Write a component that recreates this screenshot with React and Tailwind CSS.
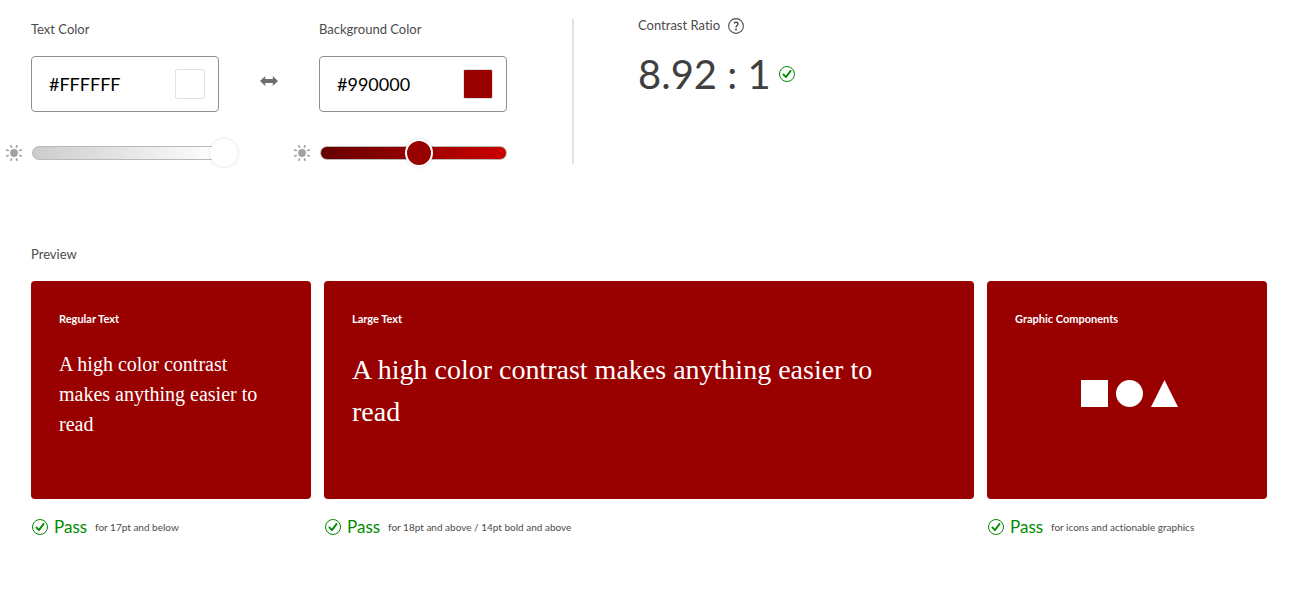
import { useState } from "react";

function CheckIcon() {
  return (
    <svg viewBox="0 0 16 16" className="size-4 shrink-0 text-[#008a00]" fill="none" stroke="currentColor" aria-hidden="true">
      <circle cx="8" cy="8" r="7.5" strokeWidth="1" />
      <path d="M4.4 8.4 L6.9 11.1 L11.6 4.9" strokeWidth="1.8" strokeLinecap="round" strokeLinejoin="round" />
    </svg>
  );
}

function HelpIcon() {
  return (
    <svg viewBox="0 0 16 16" className="size-4" fill="none" stroke="currentColor" aria-hidden="true">
      <circle cx="8" cy="8" r="7.4" strokeWidth="1.1" />
      <path d="M5.9 5.1 C6.6 4.5 7.3 4.3 8.1 4.3 C9.3 4.3 10 5 10 6 C10 7.4 8 7.6 8 9.4" strokeWidth="1.4" />
      <circle cx="8" cy="11.4" r="1" fill="currentColor" stroke="none" />
    </svg>
  );
}

function SunIcon() {
  return (
    <svg viewBox="0 0 18 18" className="size-[18px] shrink-0 text-[#a2a2a2]" fill="currentColor" stroke="currentColor" aria-hidden="true">
      <circle cx="9" cy="9" r="3.9" stroke="none" />
      <path
        d="M11.2 3.8 L12.3 1.1 M14.2 6.8 L16.9 5.7 M14.2 11.2 L16.9 12.3 M11.2 14.2 L12.3 16.9 M6.8 14.2 L5.7 16.9 M3.8 11.2 L1.1 12.3 M3.8 6.8 L1.1 5.7 M6.8 3.8 L5.7 1.1"
        strokeWidth="1.6"
      />
    </svg>
  );
}

function SwapIcon() {
  return (
    <svg viewBox="0 0 18 12" className="h-3 w-[18px]" fill="currentColor" aria-hidden="true">
      <path d="M0 6 L5.2 0.9 V4 H12.8 V0.9 L18 6 L12.8 11.1 V8 H5.2 V11.1 Z" />
    </svg>
  );
}

function ColorField({ id, label, value, onChange, trackClass, level }) {
  return (
    <div className="w-[188px]">
      <label htmlFor={id} className="block text-[13px] leading-5">{label}</label>
      <div className="mt-[17px] flex h-14 items-center justify-between rounded border border-[#909090] pr-[13px] pl-[17px]">
        <input
          id={id}
          value={value}
          onChange={(e) => onChange(e.target.value)}
          className="w-28 text-[18px] leading-6 text-black outline-none"
        />
        <button
          type="button"
          aria-label={label + " picker"}
          className="size-[30px] rounded-xs border border-[#e1e1e1]"
          style={{ backgroundColor: value }}
        />
      </div>
      <div className="mt-[27px] -ml-[26px] flex h-7 items-center gap-[9px]">
        <SunIcon />
        <div className="relative flex-1">
          <div className={"h-[14px] rounded-full border border-[#b9b9b9] bg-linear-to-r " + trackClass} />
          <input
            type="range"
            min="0"
            max="100"
            defaultValue={level}
            aria-label={label + " brightness"}
            className="absolute -top-2 -left-2 h-[30px] w-[214px] appearance-none bg-transparent [&::-webkit-slider-thumb]:size-[28px] [&::-webkit-slider-thumb]:appearance-none [&::-webkit-slider-thumb]:rounded-full [&::-webkit-slider-thumb]:border-2 [&::-webkit-slider-thumb]:border-white [&::-webkit-slider-thumb]:bg-(--thumb) [&::-webkit-slider-thumb]:shadow-[0_0_3px_rgba(0,0,0,0.16)]"
            style={{ "--thumb": value }}
          />
        </div>
      </div>
    </div>
  );
}

function PreviewCard({ title, note, fg, bg, children }) {
  return (
    <div>
      <div className="flex h-[218px] flex-col rounded p-7" style={{ color: fg, backgroundColor: bg }}>
        <h3 className="text-[11px] leading-5 font-bold">{title}</h3>
        {children}
      </div>
      <div className="mt-4 flex items-center px-px leading-6">
        <CheckIcon />
        <span className="ml-[6px] text-[17px] text-[#008a00]">Pass</span>
        <span className="ml-2 text-[10px]">{note}</span>
      </div>
    </div>
  );
}

export default function App() {
  const [fg, setFg] = useState("#FFFFFF");
  const [bg, setBg] = useState("#990000");
  const swap = () => {
    setFg(bg);
    setBg(fg);
  };

  return (
    <main className="bg-white pt-[19px] pr-[38px] pb-12 pl-[31px] font-['Lato',sans-serif] text-[#4b4b4b] [font-variant-ligatures:none]">
      <section className="flex">
        <ColorField id="text-color" label="Text Color" value={fg} onChange={setFg} level={100} trackClass="from-[#cccccc] to-white" />
        <div className="flex w-[100px] justify-center pt-[56px]">
          <button type="button" aria-label="Swap colors" onClick={swap} className="h-3 text-[#6e6e6e]">
            <SwapIcon />
          </button>
        </div>
        <ColorField id="background-color" label="Background Color" value={bg} onChange={setBg} level={50} trackClass="from-[#660000] to-[#cc0000]" />
        <div className="ml-[65px] h-[145px] w-[2px] bg-[#e1e1e1]" />
        <div className="ml-16">
          <div className="flex h-[14px] items-center gap-2 text-[13px]">
            <h2>Contrast Ratio</h2>
            <button type="button" aria-label="About contrast ratio"><HelpIcon /></button>
          </div>
          <div className="mt-[15px] flex items-center gap-2">
            <span className="text-[40px] leading-[52px] text-[#3f3f3f]">8.92 : 1</span>
            <CheckIcon />
          </div>
        </div>
      </section>

      <section className="mt-[77px]">
        <h2 className="text-[13px] leading-5">Preview</h2>
        <div className="mt-[17px] grid grid-cols-[280px_1fr_280px] gap-[13px]">
          <PreviewCard title="Regular Text" note="for 17pt and below" fg={fg} bg={bg}>
            <p className="mt-5 font-['Liberation_Serif',serif] text-[20px] leading-[30px]">A high color contrast makes anything easier to read</p>
          </PreviewCard>
          <PreviewCard title="Large Text" note="for 18pt and above / 14pt bold and above" fg={fg} bg={bg}>
            <p className="mt-5 pr-10 font-['Liberation_Serif',serif] text-[28px] leading-[42px]">A high color contrast makes anything easier to read</p>
          </PreviewCard>
          <PreviewCard title="Graphic Components" note="for icons and actionable graphics" fg={fg} bg={bg}>
            <div className="mt-[51px] flex justify-center pl-1">
              <svg viewBox="0 0 97 27" className="h-[27px] w-[97px]" fill="currentColor" aria-hidden="true">
                <rect width="27" height="27" />
                <circle cx="48.5" cy="13.5" r="13.5" />
                <path d="M83.5 0 L97 27 H70 Z" />
              </svg>
            </div>
          </PreviewCard>
        </div>
      </section>
    </main>
  );
}
